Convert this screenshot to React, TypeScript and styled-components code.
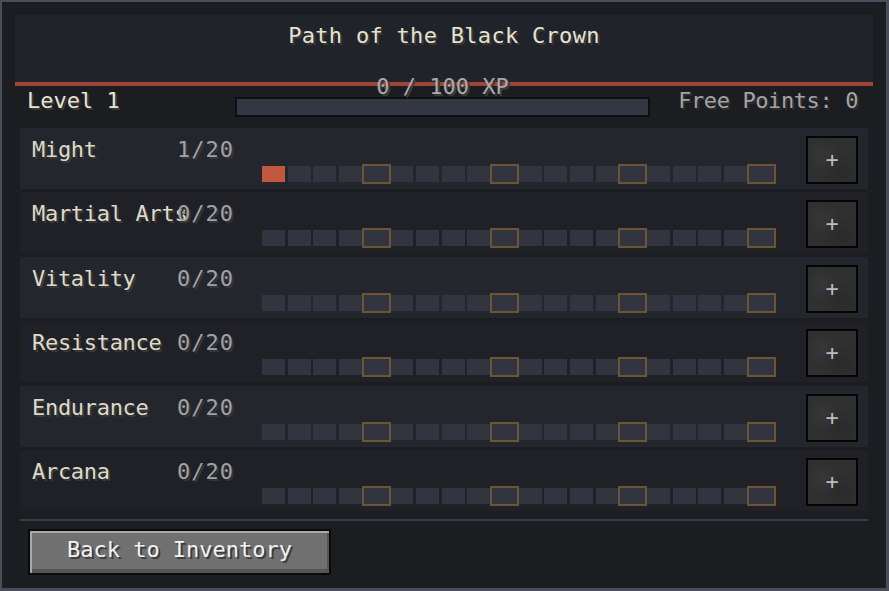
import React from "react";
import styled, { createGlobalStyle } from "styled-components";

const FONT = `"DejaVu Sans Mono", "Liberation Mono", monospace`;

const GlobalStyle = createGlobalStyle`
  html, body {
    margin: 0;
    padding: 0;
    background: #1c1d21;
  }
  * {
    box-sizing: border-box;
  }
`;

const WindowStyled = styled.div`
  width: 889px;
  height: 591px;
  display: flex;
  flex-direction: column;
  padding: 13px;
  background: #1c1d21;
  border: 2px solid #4a4e5a;
  border-right-width: 3px;
  border-bottom-width: 3px;
  font-family: ${FONT};
  font-size: 22px;
  line-height: 22px;
`;

const HeaderStyled = styled.div`
  height: 71px;
  background: #202329;
  border-bottom: 4px solid #a0443a;
  text-align: center;
  padding-top: 10px;
`;

const TitleStyled = styled.h1`
  margin: 0;
  font-size: 22px;
  font-weight: normal;
  color: #e6e2d3;
  text-shadow: 2px 2px 0 #3a3933;
  letter-spacing: 0.3px;
`;

const StatusRowStyled = styled.div`
  height: 42px;
  display: grid;
  grid-template-columns: 1fr 415px 1fr;
  align-items: start;
  padding: 0 15px 0 12px;
`;

const LevelStyled = styled.div`
  padding-top: 4px;
  color: #e8e4d8;
  text-shadow: 2px 2px 0 #3a3933;
`;

const FreePointsStyled = styled.div`
  padding-top: 4px;
  text-align: right;
  color: #a4a4a4;
  text-shadow: 2px 2px 0 #2e2e2e;
  letter-spacing: -0.4px;
`;

const XpBoxStyled = styled.div`
  position: relative;
  padding-top: 11px;
`;

const XpLabelStyled = styled.div`
  position: absolute;
  top: -10px;
  left: 0;
  right: 0;
  text-align: center;
  color: #a9a9a9;
  text-shadow: 2px 2px 0 #3c3c3c;
`;

const XpBarStyled = styled.div`
  height: 20px;
  background: #333643;
  border: 2px solid #0e0f12;
`;

const StatListStyled = styled.div`
  display: flex;
  flex-direction: column;
  gap: 3.4px;
  margin: 0 5px;
`;

const StatRowStyled = styled.div<{ $odd: boolean }>`
  height: 61px;
  display: flex;
  align-items: flex-start;
  padding: 0 10px 0 12px;
  background: ${(p) => (p.$odd ? "#23262d" : "#1f2127")};
`;

const NameBlockStyled = styled.div`
  width: 202px;
  margin-top: 11px;
  display: grid;
  grid-template-columns: minmax(0, 1fr) auto;
`;

const NameStyled = styled.span`
  white-space: nowrap;
  color: #ddd9cc;
  text-shadow: 2px 2px 0 #3a3933;
  letter-spacing: -0.3px;
`;

const ValueStyled = styled.span`
  color: #a2a2a2;
  text-shadow: 2px 2px 0 #34353a;
  letter-spacing: 1px;
`;

const PipTrackStyled = styled.div`
  width: 511px;
  margin-top: 38px;
  margin-left: 28px;
  display: flex;
  justify-content: space-between;
`;

const PipStyled = styled.div<{ $filled: boolean; $milestone: boolean }>`
  width: ${(p) => (p.$milestone ? "25px" : "23px")};
  margin: ${(p) => (p.$milestone ? "0 -1px" : "0")};
  height: 16px;
  background: ${(p) => (p.$filled ? "#c0573f" : "#32353f")};
  outline: ${(p) => (p.$milestone ? "2px solid #6e5433" : "none")};
  position: relative;
  z-index: ${(p) => (p.$milestone ? 1 : 0)};
`;

const PlusButtonStyled = styled.button`
  margin-left: auto;
  margin-top: 8px;
  width: 52px;
  height: 48px;
  padding: 0;
  border: 2px solid #050505;
  background:
    radial-gradient(circle at 30% 40%, rgba(255, 255, 255, 0.03), transparent 40%),
    radial-gradient(circle at 70% 75%, rgba(0, 0, 0, 0.12), transparent 45%),
    #303030;
  color: #bcbcbc;
  font-family: ${FONT};
  font-size: 22px;
  line-height: 22px;
  cursor: pointer;
`;

const SeparatorStyled = styled.div`
  height: 2px;
  margin: 8px 5px 0;
  background: #3a3d47;
`;

const FooterStyled = styled.div`
  padding: 8px 0 0 13px;
`;

const BackButtonStyled = styled.button`
  width: 303px;
  height: 46px;
  border: 2px solid #0a0a0a;
  background: #707070;
  box-shadow: inset 2px 2px 0 #a8a8a8, inset -2px -4px 0 #555555;
  color: #f2f2f2;
  text-shadow: 2px 2px 0 #3c3c3c;
  font-family: ${FONT};
  font-size: 22px;
  line-height: 22px;
  padding: 0 0 3px;
  cursor: pointer;
`;

type Stat = {
  name: string;
  value: number;
};

const STATS: Stat[] = [
  { name: "Might", value: 1 },
  { name: "Martial Arts", value: 0 },
  { name: "Vitality", value: 0 },
  { name: "Resistance", value: 0 },
  { name: "Endurance", value: 0 },
  { name: "Arcana", value: 0 },
];

const MAX = 20;

const StatRow = (props: { stat: Stat; index: number }) => {
  const { stat, index } = props;
  return (
    <StatRowStyled $odd={index % 2 === 0}>
      <NameBlockStyled>
        <NameStyled>{stat.name}</NameStyled>
        <ValueStyled>
          {stat.value}/{MAX}
        </ValueStyled>
      </NameBlockStyled>
      <PipTrackStyled>
        {Array.from({ length: MAX }).map((_, i) => (
          <PipStyled key={i} $filled={i < stat.value} $milestone={(i + 1) % 5 === 0} />
        ))}
      </PipTrackStyled>
      <PlusButtonStyled>+</PlusButtonStyled>
    </StatRowStyled>
  );
};

const App = () => {
  return (
    <>
      <GlobalStyle />
      <WindowStyled>
        <HeaderStyled>
          <TitleStyled>Path of the Black Crown</TitleStyled>
        </HeaderStyled>
        <StatusRowStyled>
          <LevelStyled>Level 1</LevelStyled>
          <XpBoxStyled>
            <XpLabelStyled>0 / 100 XP</XpLabelStyled>
            <XpBarStyled />
          </XpBoxStyled>
          <FreePointsStyled>Free Points: 0</FreePointsStyled>
        </StatusRowStyled>
        <StatListStyled>
          {STATS.map((s, i) => (
            <StatRow key={s.name} stat={s} index={i} />
          ))}
        </StatListStyled>
        <SeparatorStyled />
        <FooterStyled>
          <BackButtonStyled>Back to Inventory</BackButtonStyled>
        </FooterStyled>
      </WindowStyled>
    </>
  );
};

export default App;
